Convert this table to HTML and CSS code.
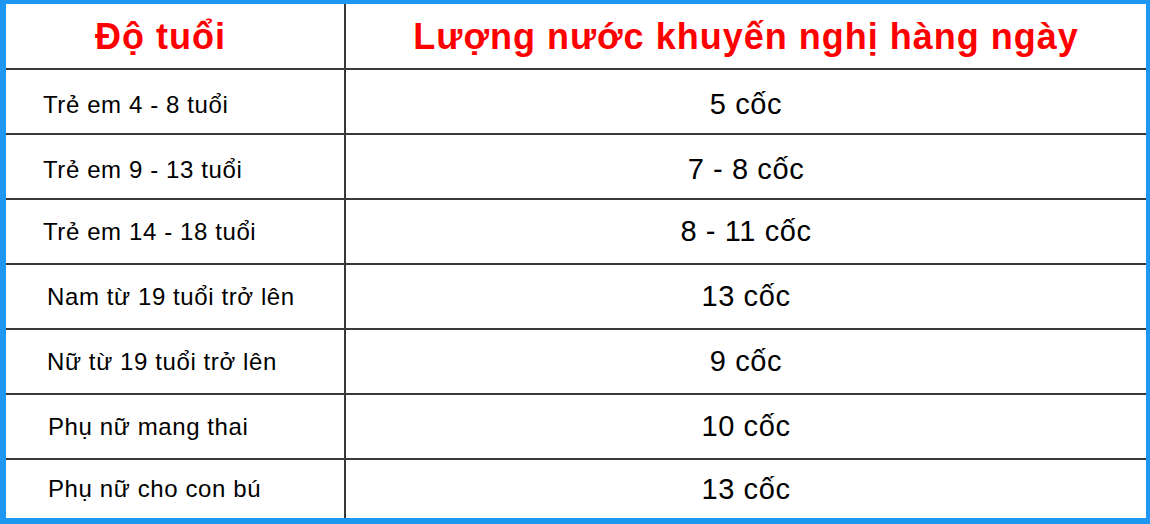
FILE: index.html
```html
<!DOCTYPE html>
<html lang="vi">
<head>
<meta charset="utf-8">
<link rel="stylesheet" href="styles.css">
</head>
<body>
<div class="frame">
  <table class="water">
    <colgroup>
      <col class="col-age">
      <col class="col-amount">
    </colgroup>
    <thead>
      <tr>
        <th class="age-head">Độ tuổi</th>
        <th class="amount-head">Lượng nước khuyến nghị hàng ngày</th>
      </tr>
    </thead>
    <tbody>
      <tr class="low"><td class="age">Trẻ em 4 - 8 tuổi</td><td class="amount">5 cốc</td></tr>
      <tr class="low"><td class="age">Trẻ em 9 - 13 tuổi</td><td class="amount">7 - 8 cốc</td></tr>
      <tr><td class="age">Trẻ em 14 - 18 tuổi</td><td class="amount">8 - 11 cốc</td></tr>
      <tr><td class="age age-in">Nam từ 19 tuổi trở lên</td><td class="amount">13 cốc</td></tr>
      <tr><td class="age age-in">Nữ từ 19 tuổi trở lên</td><td class="amount">9 cốc</td></tr>
      <tr><td class="age age-in2">Phụ nữ mang thai</td><td class="amount">10 cốc</td></tr>
      <tr class="last"><td class="age age-in2">Phụ nữ cho con bú</td><td class="amount">13 cốc</td></tr>
    </tbody>
  </table>
</div>
</body>
</html>
```
FILE: styles.css
```css
html, body {
  margin: 0;
  padding: 0;
}
body {
  width: 1150px;
  height: 524px;
  overflow: hidden;
  font-family: "Liberation Sans", Arial, sans-serif;
  background: #1d97f2;
}
.frame {
  box-sizing: border-box;
  width: 1150px;
  height: 524px;
  border-style: solid;
  border-color: #1d97f2;
  border-width: 4px 4px 6px 6px;
  background: #fff;
}
.water {
  border-collapse: collapse;
  width: 1140px;
  table-layout: fixed;
}
.col-age {
  width: 339px;
}
.col-amount {
  width: 801px;
}
.water th, .water td {
  box-sizing: border-box;
  padding: 0;
  height: 65px;
  border-bottom: 2px solid #383838;
  vertical-align: middle;
  color: #000;
  white-space: nowrap;
}
.water tr.last td {
  border-bottom: none;
  height: 59px;
}
.water th:first-child, .water td:first-child {
  border-right: 2px solid #383838;
}
.water th.age-head, .water th.amount-head {
  color: #f00;
  font-weight: bold;
  font-size: 36px;
  letter-spacing: 1px;
  padding-top: 2px;
}
.water th.age-head {
  text-align: left;
  padding-left: 89px;
}
.water th.amount-head {
  text-align: center;
}
.water td.age {
  text-align: left;
  font-size: 24px;
  letter-spacing: 0.6px;
  padding-left: 37px;
}
.water td.age-in {
  padding-left: 41px;
}
.water td.age-in2 {
  padding-left: 42px;
}
.water td.amount {
  text-align: center;
  font-size: 29px;
  letter-spacing: 0.6px;
}
.water tr.low td {
  padding-top: 6px;
}
```
